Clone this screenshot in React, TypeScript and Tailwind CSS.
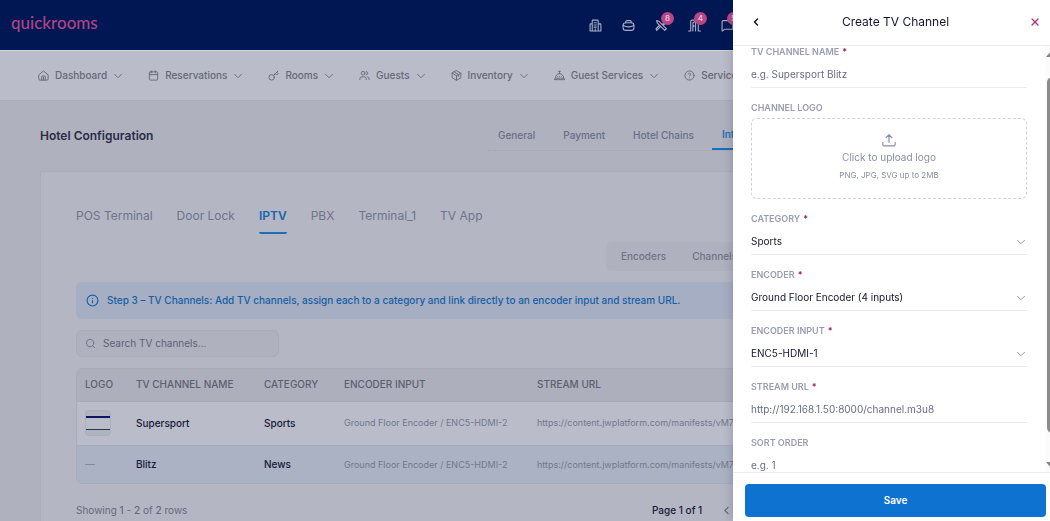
import type { ComponentType, ReactNode } from "react";
import { Calendar, ChevronDown, ChevronLeft, CircleQuestionMark, Info, MessageSquare, Search, Users, X } from "lucide-react";

type IconProps = { className?: string; strokeWidth?: number };
type Icon = ComponentType<IconProps>;

function svgIcon(children: ReactNode): Icon {
  return function DrawnIcon({ className, strokeWidth = 2 }: IconProps) {
    return (
      <svg
        viewBox="0 0 24 24"
        fill="none"
        stroke="currentColor"
        strokeWidth={strokeWidth}
        strokeLinecap="round"
        strokeLinejoin="round"
        className={className}
        aria-hidden="true"
      >
        {children}
      </svg>
    );
  };
}

const HomeIcon = svgIcon(
  <>
    <path d="M2 10.5 12 2l10 8.5V20a2 2 0 0 1-2 2H4a2 2 0 0 1-2-2Z" />
    <path d="M8 22v-7a2 2 0 0 1 2-2h4a2 2 0 0 1 2 2v7M12 15v7" />
  </>
);

const KeyIcon = svgIcon(
  <>
    <circle cx="8" cy="16" r="6" />
    <path d="M12.5 11.5 21.5 2.5M16 8l3 3 3-3-3-3" />
  </>
);

const BoxIcon = svgIcon(
  <>
    <path d="M12 1.5 21.5 7v10L12 22.5 2.5 17V7Z" />
    <path d="m2.5 7 9.5 5.5 9.5-5.5M12 12.5v10M7 4.5l9.5 5.5v4" />
  </>
);

const BellIcon = svgIcon(
  <>
    <path d="M3 17a9 9 0 0 1 18 0ZM12 8V3M10 3h4M1 21h22M3 17l-2 4M21 17l2 4M8 14h.01M12 14h.01M16 14h.01" />
  </>
);

const ToolsIcon = svgIcon(
  <>
    <path d="m3 3 4 1 14 14-3 3L4 7ZM14 10l4-4-1-3 3-1 2 4-3 2-4 4M10 14l-7 7-1-3 6-6" />
  </>
);

const DoorIcon = svgIcon(
  <>
    <path d="M1 22h4V5a3 3 0 0 1 3-3h8a3 3 0 0 1 3 3v17h4M9 22V7l5-3v18M11 12v2" />
  </>
);

const BagIcon = svgIcon(
  <>
    <rect x="2" y="7" width="20" height="14" rx="5" />
    <path d="M7 7V5a2 2 0 0 1 2-2h6a2 2 0 0 1 2 2v2M2 12q10 5 20 0" />
  </>
);

const HotelIcon = svgIcon(
  <>
    <path d="M6 22V3a1 1 0 0 1 1-1h9a1 1 0 0 1 1 1v19M6 9H3a1 1 0 0 0-1 1v12h20V10a1 1 0 0 0-1-1h-4" />
    <path d="M9.5 7h4M9.5 11h4M9.5 15h4M11.5 18v4" />
  </>
);

const UploadIcon = svgIcon(<path d="M12 16V3M7 8l5-5 5 5M1.5 16v4a2 2 0 0 0 2 2h17a2 2 0 0 0 2-2v-4" />);

const headerIcons: { label: string; icon: Icon; count?: number }[] = [
  { label: "Property", icon: HotelIcon },
  { label: "Business", icon: BagIcon },
  { label: "Maintenance", icon: ToolsIcon, count: 8 },
  { label: "Rooms", icon: DoorIcon, count: 4 },
  { label: "Messages", icon: MessageSquare, count: 5 },
];

const navItems: { label: string; icon: Icon }[] = [
  { label: "Dashboard", icon: HomeIcon },
  { label: "Reservations", icon: Calendar },
  { label: "Rooms", icon: KeyIcon },
  { label: "Guests", icon: Users },
  { label: "Inventory", icon: BoxIcon },
  { label: "Guest Services", icon: BellIcon },
  { label: "Services", icon: CircleQuestionMark },
];

const configTabs = ["General", "Payment", "Hotel Chains", "Integrations"];
const deviceTabs = ["POS Terminal", "Door Lock", "IPTV", "PBX", "Terminal_1", "TV App"];

const channels = [
  { name: "Supersport", category: "Sports", hasLogo: true },
  { name: "Blitz", category: "News", hasLogo: false },
];

function TopBar() {
  return (
    <header className="flex h-[50px] items-center bg-[#001753] pl-[11px]">
      <a href="#" className="pb-1 font-[Lato] text-[17px] leading-6 font-medium text-[#b04585]">
        quickrooms
      </a>
      <div className="ml-auto flex w-[461px] gap-5">
        {headerIcons.map(({ label, icon: Glyph, count }) => (
          <button key={label} type="button" aria-label={label} className="relative text-[#a9adc3]">
            <Glyph className="size-[13px]" strokeWidth={2} />
            {count && (
              <span className="absolute -top-[7px] left-[6px] flex size-[13px] items-center justify-center rounded-full bg-[#bb4488] text-[8px] font-semibold text-[#d5c3d8]">
                {count}
              </span>
            )}
          </button>
        ))}
      </div>
    </header>
  );
}

function MainNav() {
  return (
    <nav className="flex h-[51px] items-center gap-[23px] border-t border-b border-t-[#d0d2dc] border-b-[#a9abb9] bg-[#babcc9] pl-[38px]">
      {navItems.map(({ label, icon: Glyph }) => (
        <a key={label} href="#" className="flex shrink-0 items-center text-[10px] font-medium text-[#666876]">
          <Glyph className="mr-[6px] size-[11px]" strokeWidth={2} />
          {label}
          <ChevronDown className="ml-1 size-[14px]" strokeWidth={1.5} />
        </a>
      ))}
    </nav>
  );
}

function ChannelTable() {
  return (
    <div className="overflow-hidden rounded-md border border-[#a8abba]">
      <table className="w-full table-fixed text-left text-[10px]">
        <colgroup>
          <col className="w-[51px]" />
          <col className="w-[128px]" />
          <col className="w-[80px]" />
          <col className="w-[193px]" />
          <col />
        </colgroup>
        <thead className="bg-[#adafbd] text-[#5d606f]">
          <tr className="h-8 border-b border-[#a6a9b8]">
            {["LOGO", "TV CHANNEL NAME", "CATEGORY", "ENCODER INPUT", "STREAM URL"].map((h) => (
              <th key={h} className="px-2 font-medium whitespace-nowrap">
                {h}
              </th>
            ))}
          </tr>
        </thead>
        <tbody className="text-[#17193a]">
          {channels.map((c) => (
            <tr
              key={c.name}
              className={c.hasLogo ? "h-[44px] border-b border-[#a6a9b8] bg-[#babcc9]" : "h-[38px] bg-[#abb2c3]"}
            >
              <td className="px-2 text-[#7b7f91]">
                {c.hasLogo ? (
                  <div className="flex size-[26px] items-center rounded border border-[#abaebb] bg-[#b0b3c0]">
                    <div className="h-[14px] w-full border-t-2 border-b border-t-[#0b1561] border-b-[#30354f] bg-[#b9bdca]" />
                  </div>
                ) : (
                  "—"
                )}
              </td>
              <td className="px-2 font-medium">{c.name}</td>
              <td className="px-2 font-medium">{c.category}</td>
              <td className="px-2 text-[9px] whitespace-nowrap text-[#74788b]">Ground Floor Encoder / ENC5-HDMI-2</td>
              <td className="truncate px-2 text-[9px] text-[#74788b]">
                https://content.jwplatform.com/manifests/vM7nH0Kl.m3u8
              </td>
            </tr>
          ))}
        </tbody>
      </table>
    </div>
  );
}

function HotelConfiguration() {
  return (
    <main className="px-10">
      <div className="flex h-[70px] items-center justify-between">
        <h1 className="text-[12px] font-semibold text-[#2a2d45]">Hotel Configuration</h1>
        <div className="flex w-[522px] gap-2 border-b border-dotted border-[#a0a3b2]">
          {configTabs.map((tab) => (
            <button
              key={tab}
              type="button"
              className={
                tab === "Integrations"
                  ? "-mb-px h-7 border-b-2 border-[#1b6fb5] px-[10px] text-[10px] font-semibold text-[#1b6fb5]"
                  : "h-7 px-[10px] text-[10px] font-medium text-[#6b6f82]"
              }
            >
              {tab}
            </button>
          ))}
        </div>
      </div>

      <section className="border border-[#a9acba] bg-[#b4b6c3] px-[35px] pt-8">
        <div className="flex gap-6">
          {deviceTabs.map((tab) => (
            <button
              key={tab}
              type="button"
              className={
                tab === "IPTV"
                  ? "h-[30px] rounded-xs border-b-2 border-[#1b6fb5] pb-[5px] text-[12px] font-semibold text-[#1765ab]"
                  : "h-[30px] pb-[7px] text-[12px] text-[#6f7488]"
              }
            >
              {tab}
            </button>
          ))}
        </div>

        <div className="mt-2 ml-auto flex h-[29px] w-[368px] items-center gap-[26px] rounded-md bg-[#afb1be] px-[15px] text-[10px] font-medium text-[#6f7386]">
          <button type="button">Encoders</button>
          <button type="button">Channels</button>
        </div>

        <p className="mt-[11px] flex h-[37px] items-center gap-2 rounded-md bg-[#a6aec4] px-[10px] text-[10px] font-medium text-[#155fa3]">
          <Info className="size-[13px] shrink-0" />
          Step 3 – TV Channels: Add TV channels, assign each to a category and link directly to an encoder input and
          stream URL.
        </p>

        <label className="mt-[11px] mb-[11px] flex h-[27px] w-[203px] items-center gap-[7px] rounded-md border border-[#a9acba] bg-[#afb1be] px-2 text-[#6b7083]">
          <Search className="size-[11px] shrink-0" />
          <input
            type="search"
            aria-label="Search TV channels"
            placeholder="Search TV channels..."
            className="w-full bg-transparent text-[10px] outline-none placeholder:text-[#5f6375]"
          />
        </label>

        <ChannelTable />

        <div className="flex h-[53px] items-center justify-between text-[10px] text-[#666a7c]">
          <p>
            Showing <span className="font-medium">1</span> - <span className="font-medium">2</span> of{" "}
            <span className="font-medium">2</span> rows
          </p>
          <div className="flex w-[322px] items-center gap-[18px]">
            <span className="font-medium text-[#17193a]">Page 1 of 1</span>
            <button type="button" aria-label="Previous page">
              <ChevronLeft className="size-[13px]" />
            </button>
          </div>
        </div>
      </section>
    </main>
  );
}

function FieldLabel({ id, text, required }: { id: string; text: string; required?: boolean }) {
  return (
    <label htmlFor={id} className="block text-[9px] leading-3 font-semibold text-[#989db0]">
      {text}
      {required && <span className="ml-[3px] text-[#a3195b]">*</span>}
    </label>
  );
}

function TextField({ id, label, placeholder, required }: { id: string; label: string; placeholder: string; required?: boolean }) {
  return (
    <div>
      <FieldLabel id={id} text={label} required={required} />
      <input
        id={id}
        type="text"
        placeholder={placeholder}
        className="mt-1 block h-[26px] w-full border-b border-[#ececf0] pb-[2px] text-[10px] outline-none placeholder:text-[#676c82]"
      />
    </div>
  );
}

function SelectField({ id, label, value }: { id: string; label: string; value: string }) {
  return (
    <div>
      <FieldLabel id={id} text={label} required />
      <div className="relative mt-1">
        <select
          id={id}
          defaultValue={value}
          className="block h-[26px] w-full appearance-none border-b border-[#ececf0] bg-transparent text-[10px] text-[#13152e] outline-none"
        >
          <option>{value}</option>
        </select>
        <ChevronDown
          className="pointer-events-none absolute top-[6px] -right-px size-[14px] text-[#8086a0]"
          strokeWidth={1.5}
        />
      </div>
    </div>
  );
}

function CreateChannelDrawer() {
  return (
    <aside className="fixed inset-y-0 -right-2 flex w-[325px] flex-col bg-white shadow-[0_0_10px_rgba(30,30,70,0.25)]">
      <div className="flex h-[46px] shrink-0 items-center justify-between border-b border-[#ececf0] px-[17px] pb-px">
        <button type="button" aria-label="Back" className="text-[#13152e]">
          <ChevronLeft className="size-[12px]" strokeWidth={3} />
        </button>
        <h2 className="text-[12px] text-[#13152e]">Create TV Channel</h2>
        <button type="button" aria-label="Close" className="text-[#b03070]">
          <X className="size-[12px]" strokeWidth={2.5} />
        </button>
      </div>

      <div className="flex min-h-0 flex-1">
        <form className="flex flex-1 flex-col gap-[14px] overflow-hidden px-[18px]">
          <TextField id="channel-name" label="TV CHANNEL NAME" placeholder="e.g. Supersport Blitz" required />
          <div>
            <FieldLabel id="channel-logo" text="CHANNEL LOGO" />
            <button
              id="channel-logo"
              type="button"
              className="mt-1 flex h-[81px] w-full flex-col items-center rounded-md border border-dashed border-[#cfd1da] pt-[14px] text-[#8a8fa4]"
            >
              <UploadIcon className="size-[14px]" />
              <span className="mt-[2px] text-[10px] leading-4">Click to upload logo</span>
              <span className="mt-1 text-[8px] leading-3">PNG, JPG, SVG up to 2MB</span>
            </button>
          </div>
          <SelectField id="category" label="CATEGORY" value="Sports" />
          <SelectField id="encoder" label="ENCODER" value="Ground Floor Encoder (4 inputs)" />
          <SelectField id="encoder-input" label="ENCODER INPUT" value="ENC5-HDMI-1" />
          <TextField id="stream-url" label="STREAM URL" placeholder="http://192.168.1.50:8000/channel.m3u8" required />
          <TextField id="sort-order" label="SORT ORDER" placeholder="e.g. 1" />
        </form>
        <div className="flex w-[13px] shrink-0 flex-col items-end bg-[#fbfbfb] pt-1 pb-[3px]">
          <svg viewBox="0 0 12 7" className="h-[7px] w-[12px] fill-[#858585]" aria-hidden="true">
            <path d="M6 0 12 7H0Z" />
          </svg>
          <div className="mt-5 mb-auto h-[85%] w-[11px] rounded-full bg-[#8b8b8b]" />
          <svg viewBox="0 0 12 7" className="h-[7px] w-[12px] fill-[#858585]" aria-hidden="true">
            <path d="M0 0h12L6 7Z" />
          </svg>
        </div>
      </div>

      <div className="shrink-0 border-t border-[#ececf0] px-3 pt-[11px] pb-1">
        <button type="submit" className="h-[33px] w-full rounded bg-[#0e72d0] text-[10px] font-semibold text-white">
          Save
        </button>
      </div>
    </aside>
  );
}

export default function App() {
  return (
    <div className="h-screen overflow-hidden bg-[#afb1bf] font-[Inter,sans-serif]">
      <TopBar />
      <MainNav />
      <HotelConfiguration />
      <CreateChannelDrawer />
    </div>
  );
}
